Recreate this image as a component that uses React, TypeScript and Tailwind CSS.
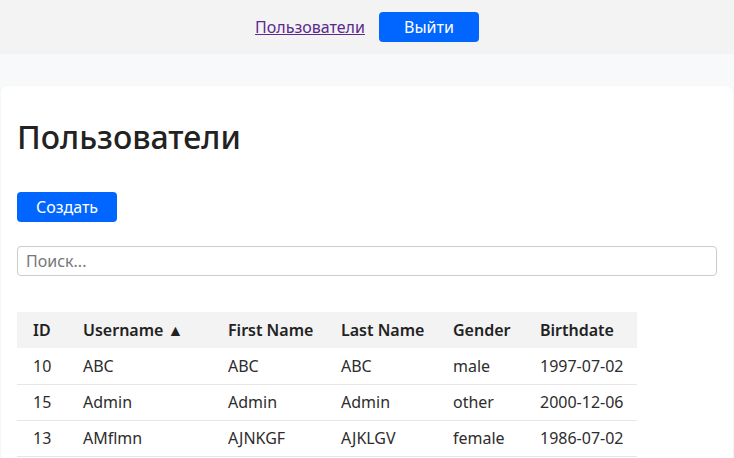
const users = [
  { id: 10, username: "ABC", first: "ABC", last: "ABC", gender: "male", birth: "1997-07-02" },
  { id: 15, username: "Admin", first: "Admin", last: "Admin", gender: "other", birth: "2000-12-06" },
  { id: 13, username: "AMflmn", first: "AJNKGF", last: "AJKLGV", gender: "female", birth: "1986-07-02" },
];

const font = { fontFamily: '"Noto Sans", "Open Sans", sans-serif' };

export default function App() {
  return (
    <div className="h-screen overflow-hidden bg-[#f8f9fb] text-[#222]" style={font}>
      <nav className="h-[54px] bg-[#f3f3f3] flex items-center justify-center gap-[14px]">
        <a href="#" className="text-[#5a2a8c] underline text-[16px]">Пользователи</a>
        <button className="w-[100px] h-[30px] rounded bg-[#0066ff] text-white text-[16px]">Выйти</button>
      </nav>

      <main className="pt-8 px-px">
        <div className="bg-white rounded-md shadow-[0_0_2px_rgba(0,0,0,0.06)] px-4 pt-4 pb-6">
          <h1 className="text-[32px] leading-[38px] font-medium mt-[16px] mb-[36px]">Пользователи</h1>
          <button className="w-[100px] h-[30px] rounded bg-[#0066ff] text-white text-[16px]">Создать</button>
          <input
            placeholder="Поиск..."
            className="block w-full h-[30px] mt-6 border border-[#cccccc] rounded px-2 text-[16px] placeholder:text-[#777] outline-none"
          />
          <table className="mt-9 border-collapse text-[16px] text-left text-[#2d2d2d]">
            <thead>
              <tr className="bg-[#f3f3f3] h-[36px] text-[#222]">
                <th className="pl-4 w-[50px] font-semibold">ID</th>
                <th className="pl-4 w-[145px] font-semibold">Username ▲</th>
                <th className="pl-4 w-[113px] font-semibold">First Name</th>
                <th className="pl-4 w-[112px] font-semibold">Last Name</th>
                <th className="pl-4 w-[87px] font-semibold">Gender</th>
                <th className="pl-4 w-[113px] font-semibold">Birthdate</th>
              </tr>
            </thead>
            <tbody>
              {users.map((u) => (
                <tr key={u.id} className="h-[36px] border-b border-[#e6e6e6]">
                  <td className="pl-4">{u.id}</td>
                  <td className="pl-4">{u.username}</td>
                  <td className="pl-4">{u.first}</td>
                  <td className="pl-4">{u.last}</td>
                  <td className="pl-4">{u.gender}</td>
                  <td className="pl-4">{u.birth}</td>
                </tr>
              ))}
            </tbody>
          </table>
        </div>
      </main>
    </div>
  );
}
